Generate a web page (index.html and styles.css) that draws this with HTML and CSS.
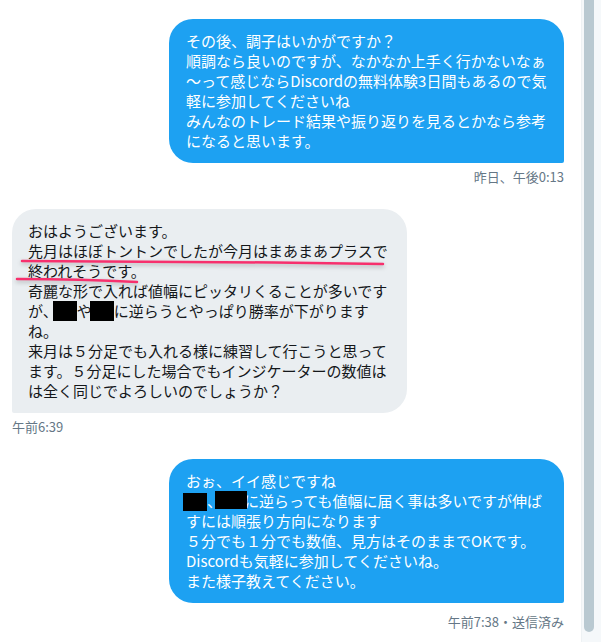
FILE: index.html
```html
<!DOCTYPE html>
<html lang="ja">
<head>
    <meta charset="UTF-8">
    <title>メッセージ</title>
    <link rel="stylesheet" href="styles.css">
</head>
<body>
    <div class="app">
        <div class="chat">
            <div class="msg sent first">
                <div class="bubble">その後、調子はいかがですか？<br>順調なら良いのですが、なかなか上手く行かないなぁ<br>～って感じならDiscordの無料体験3日間もあるので気<br>軽に参加してくださいね<br>みんなのトレード結果や振り返りを見るとかなら参考<br>になると思います。</div>
                <div class="time">昨日、午後0:13</div>
            </div>

            <div class="msg received">
                <div class="bubble">おはようございます。<br>先月はほぼトントンでしたが今月はまあまあプラスで<br>終われそうです。<br>奇麗な形で入れば値幅にピッタリくることが多いです<br>が、<span class="redact r1"></span>や<span class="redact r2"></span>に逆らうとやっぱり勝率が下がります<br>ね。<br>来月は５分足でも入れる様に練習して行こうと思って<br>ます。５分足にした場合でもインジケーターの数値は<br>は全く同じでよろしいのでしょうか？</div>
                <div class="time">午前6:39</div>
            </div>

            <div class="msg sent">
                <div class="bubble"><span>おぉ、イイ感じですね</span><br><span class="redact r3"></span>、<span class="redact r4"></span>に逆らっても値幅に届く事は多いですが伸ば<br>すには順張り方向になります<br>５分でも１分でも数値、見方はそのままでOKです。<br>Discordも気軽に参加してくださいね。<br>また様子教えてください。</div>
                <div class="time status">午前7:38・送信済み</div>
            </div>

            <!-- hand drawn underlines over the second message -->
            <svg class="marks" width="580" height="642" viewBox="0 0 580 642">
                <path d="M22 261 C120 261 260 262 383 264" />
                <path d="M17 279 C60 279 100 280 137 282" />
            </svg>
        </div>

        <div class="scrollbar">
            <div class="thumb"></div>
        </div>
    </div>
</body>
</html>
```

FILE: styles.css
```css
* {
    margin: 0;
    padding: 0;
    box-sizing: border-box;
}

body {
    background: #ffffff;
    font-family: "Noto Sans CJK JP", "Noto Sans", sans-serif;
    color: #14171a;
    overflow: hidden;
}

.app {
    display: flex;
    height: 642px;
}

.chat {
    position: relative;
    flex: 1;
    padding: 19px 17px 0 12px;
}

.msg {
    display: flex;
    flex-direction: column;
    margin-top: 24px;
}

.msg.first {
    margin-top: 0;
}

.msg.sent {
    align-items: flex-end;
}

.msg.received {
    align-items: flex-start;
}

.bubble {
    width: 395px;
    padding: 12px 16px 12px 17px;
    font-size: 15px;
    line-height: 20px;
    white-space: nowrap;
    border-radius: 24px;
}

.sent .bubble {
    background: #1da1f2;
    color: #ffffff;
    border-bottom-right-radius: 2px;
}

.received .bubble {
    background: #eaeef1;
    color: #14171a;
    padding-left: 16px;
    border-bottom-left-radius: 2px;
}

.time {
    margin-top: 5px;
    font-size: 13px;
    line-height: 17px;
    color: #657786;
}

.time.status {
    margin-top: 10px;
}

.redact {
    position: relative;
    display: inline-block;
    width: 24px;
    height: 20px;
    background: #000000;
    vertical-align: top;
}

.redact.r1 {
    margin-left: -5px;
}

.redact.r2 {
    margin-left: -2px;
}

.redact.r3 {
    margin-left: -3px;
    top: 2px;
    height: 18px;
}

.redact.r4 {
    width: 32px;
    margin-left: -7px;
    margin-right: -3px;
    height: 18px;
}

.marks {
    position: absolute;
    left: 0;
    top: 0;
    pointer-events: none;
    filter: drop-shadow(0 2px 2px rgba(0, 0, 0, 0.25));
}

.marks path {
    fill: none;
    stroke: #f7306d;
    stroke-width: 2.5;
    stroke-linecap: round;
}

.scrollbar {
    width: 20px;
    padding: 0 5px 10px 2px;
    background: #f5f8fa;
    border-left: 1px solid #eef2f4;
}

.thumb {
    width: 10px;
    height: 632px;
    background: #b9c9d1;
    border-radius: 0 0 5px 5px;
}
```
